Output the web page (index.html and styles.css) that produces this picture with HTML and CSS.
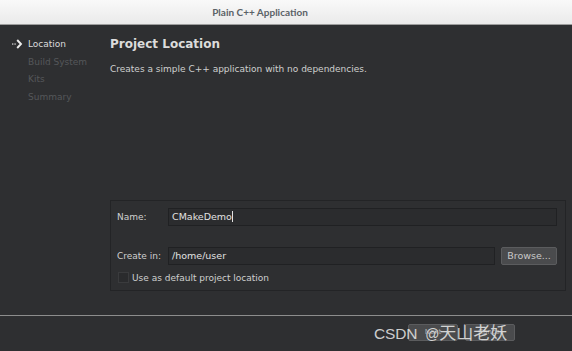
FILE: index.html
```html
<!DOCTYPE html>
<html>
<head>
<meta charset="utf-8">
<link rel="stylesheet" href="styles.css">
</head>
<body>
<div class="window">
  <div class="titlebar">Plain C++ Application</div>
  <div class="main">
    <div class="sidebar">
      <div class="step current"><span class="arrow"><svg width="12" height="10" viewBox="0 0 12 10"><path d="M6.2 1 L10 5 L6.2 9" fill="none" stroke="#ececec" stroke-width="1.9"/><rect x="1" y="4.4" width="1.4" height="1.3" fill="#cfcfcf"/><rect x="3.4" y="4.4" width="1.4" height="1.3" fill="#cfcfcf"/></svg></span>Location</div>
      <div class="step">Build System</div>
      <div class="step">Kits</div>
      <div class="step">Summary</div>
    </div>
    <div class="content">
      <div class="heading">Project Location</div>
      <div class="desc">Creates a simple C++ application with no dependencies.</div>
      <div class="group">
        <div class="row">
          <span class="label">Name:</span>
          <div class="input grow">CMakeDemo<span class="caret"></span></div>
        </div>
        <div class="row row2">
          <span class="label">Create in:</span>
          <div class="input grow">/home/user</div>
          <div class="button">Browse...</div>
        </div>
        <div class="check-row">
          <span class="checkbox"></span>
          <span class="check-label">Use as default project location</span>
        </div>
      </div>
    </div>
  </div>
  <div class="footer">
    <div class="fbtn">Next</div>
    <div class="fbtn">Cancel</div>
  </div>
  <div class="watermark"><span class="wm-latin">CSDN</span><span class="wm-at">@</span><span class="wm-cjk">天山老妖</span></div>
</div>
</body>
</html>
```
FILE: styles.css
```css
html, body {
  margin: 0;
  padding: 0;
}
body {
  width: 572px;
  height: 351px;
  overflow: hidden;
  background: #2e2f31;
  font-family: "DejaVu Sans", sans-serif;
  font-size: 9px;
  color: #d6d6d6;
}
.window {
  position: relative;
  width: 572px;
  height: 351px;
  display: flex;
  flex-direction: column;
}
.titlebar {
  height: 24px;
  line-height: 24px;
  background: linear-gradient(#f9f9f9, #eaeaea);
  border-bottom: 1px solid #9d9d9d;
  text-align: center;
  color: #5b6267;
  font-family: "Lato", "DejaVu Sans", sans-serif;
  font-weight: bold;
  font-size: 10px;
  padding-right: 52px;
  flex: none;
}
.main {
  flex: none;
  height: 290px;
  display: flex;
}
.sidebar {
  width: 110px;
  flex: none;
  padding-top: 14px;
  box-sizing: border-box;
}
.step {
  height: 17.6px;
  line-height: 11px;
  padding-left: 28px;
  color: #55575a;
  position: relative;
}
.step.current {
  color: #dcdcdc;
}
.arrow {
  position: absolute;
  left: 11px;
  top: 0px;
}
.content {
  flex: 1;
  display: flex;
  flex-direction: column;
  padding: 11px 6px 24px 0;
}
.heading {
  font-size: 12px;
  font-weight: bold;
  color: #dcdcdc;
  line-height: 16px;
}
.desc {
  margin-top: 12px;
  color: #cfcfcf;
}
.group {
  margin-top: auto;
  height: 91px;
  box-sizing: border-box;
  border: 1px solid #232426;
  padding: 7px 8px 0 6px;
}
.row {
  display: flex;
  align-items: center;
  height: 18px;
}
.row2 {
  margin-top: 21px;
}
.label {
  width: 51px;
  flex: none;
  color: #cfcfcf;
}
.input {
  height: 18px;
  box-sizing: border-box;
  background: #2b2c2e;
  border: 1px solid #202123;
  padding-left: 3px;
  line-height: 16px;
  color: #e2e2e2;
  font-size: 9.5px;
}
.grow {
  flex: 1;
}
.caret {
  display: inline-block;
  width: 1px;
  height: 11px;
  background: #e0e0e0;
  vertical-align: -2px;
}
.button {
  width: 56px;
  height: 18px;
  margin-left: 6px;
  box-sizing: border-box;
  background: #4a4b4d;
  border: 1px solid #5b5c5e;
  border-radius: 2px;
  color: #c8c8c8;
  text-align: center;
  line-height: 16px;
  font-size: 9.5px;
}
.check-row {
  display: flex;
  align-items: center;
  margin-top: 7px;
}
.checkbox {
  width: 9px;
  height: 9px;
  border: 1px solid #3a3b3d;
  background: #2a2b2d;
  margin-left: 1px;
  margin-right: 3px;
}
.check-label {
  color: #cfcfcf;
}
.footer {
  flex: 1;
  border-top: 1px solid #8d8d8d;
  display: flex;
  justify-content: flex-end;
  align-items: flex-start;
  gap: 7px;
  padding: 8px 57px 0 0;
}
.fbtn {
  width: 50px;
  height: 17px;
  box-sizing: border-box;
  background: #4a4b4d;
  border: 1px solid #5b5c5e;
  border-radius: 2px;
  color: #a8a8a8;
  font-size: 7px;
  line-height: 15px;
  text-align: center;
}
.watermark {
  position: absolute;
  left: 374px;
  top: 322px;
  font-family: "Liberation Sans", "Noto Sans CJK SC", sans-serif;
  color: rgba(235, 235, 235, 0.85);
  white-space: nowrap;
  line-height: 20px;
}
.wm-latin {
  font-size: 15.5px;
  letter-spacing: -0.2px;
}
.wm-at {
  font-size: 14px;
  margin-left: 8px;
}
.wm-cjk {
  font-family: "Noto Sans CJK SC", sans-serif;
  font-size: 17px;
}
```
